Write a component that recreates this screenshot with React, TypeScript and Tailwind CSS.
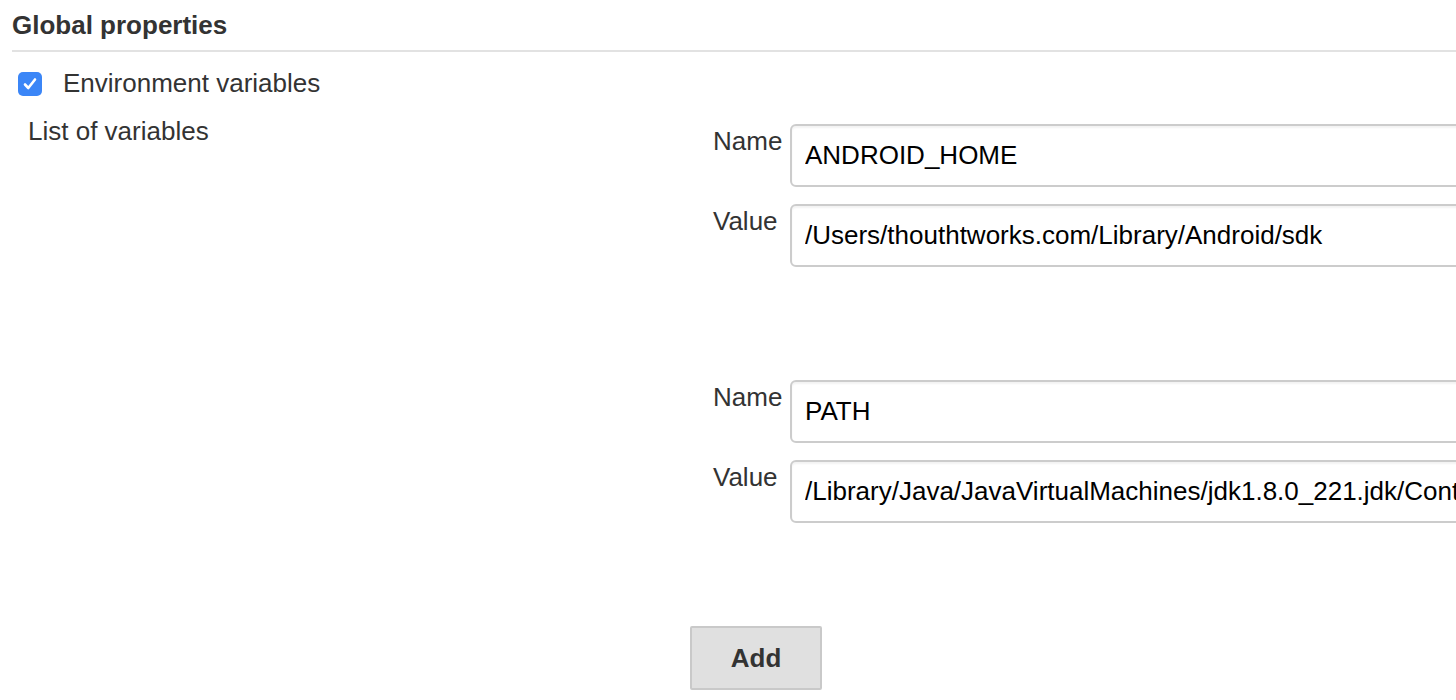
import React from 'react';

type EnvVar = { name: string; value: string };

const variables: EnvVar[] = [
  { name: 'ANDROID_HOME', value: '/Users/thouthtworks.com/Library/Android/sdk' },
  {
    name: 'PATH',
    value: '/Library/Java/JavaVirtualMachines/jdk1.8.0_221.jdk/Contents/Home/bin:/usr/local/bin:/usr/bin:/bin',
  },
];

function Field({ label, value }: { label: string; value: string }) {
  return (
    <div className="flex">
      <label className="w-[100px] shrink-0 pl-[23px] pt-[2px] leading-[30px] text-[#333]">{label}</label>
      <input
        readOnly
        value={value}
        className="h-[63px] w-[900px] shrink-0 rounded-[6px] border-2 border-[#cccccc] pl-[13px] text-black shadow-[inset_0_2px_2px_rgba(0,0,0,0.05)] outline-none"
      />
    </div>
  );
}

export default function App() {
  return (
    <div className="h-[700px] w-[1456px] overflow-hidden bg-white font-['Liberation_Sans',Arial,sans-serif] text-[26px] text-[#333]">
      <div className="pl-3 pt-[10px]">
        <h2 className="text-[26px] font-bold leading-[30px] text-[#333]">Global properties</h2>
        <div className="mt-[10px] h-[2px] bg-[#e2e2e2]" />
      </div>

      <div className="mt-4 flex items-center gap-[21px] pl-[18px] leading-[30px]">
        <div className="mt-[2px] flex h-6 w-6 items-center justify-center rounded-[5px] bg-[#3b86f7]">
          <svg width="16" height="16" viewBox="0 0 16 16" fill="none">
            <path d="M3 8.5 L6.3 12 L13 3.5" stroke="white" strokeWidth="2.6" strokeLinecap="round" strokeLinejoin="round" />
          </svg>
        </div>
        <span>Environment variables</span>
      </div>

      <div className="mt-[18px] flex">
        <div className="w-[690px] shrink-0 pl-[28px] leading-[30px]">List of variables</div>
        <div className="flex flex-col pt-2">
          <div className="flex flex-col gap-[113px]">
            {variables.map((v) => (
              <div key={v.name} className="flex flex-col gap-[17px]">
                <Field label="Name" value={v.name} />
                <Field label="Value" value={v.value} />
              </div>
            ))}
          </div>
          <button
            type="button"
            className="mt-[103px] h-[64px] w-[132px] rounded-[2px] border-2 border-[#c9c9c9] bg-[#e0e0e0] font-bold text-[#333]"
          >
            Add
          </button>
        </div>
      </div>
    </div>
  );
}
